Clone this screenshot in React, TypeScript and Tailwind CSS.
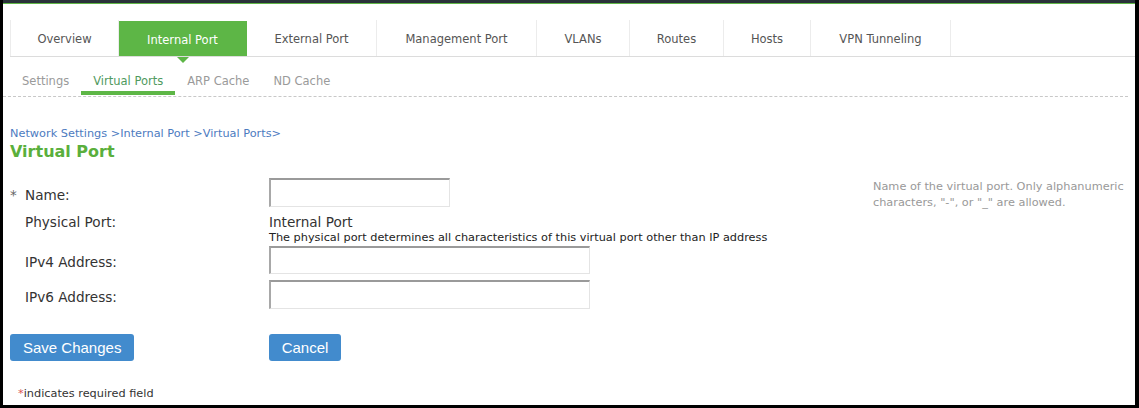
import React from 'react';
import { clsx } from 'clsx';

const tabs = [
  { label: 'Overview', w: 'w-[109px]' },
  { label: 'Internal Port', w: 'w-[128px]', active: true },
  { label: 'External Port', w: 'w-[130px]' },
  { label: 'Management Port', w: 'w-[160px]' },
  { label: 'VLANs', w: 'w-[93px]' },
  { label: 'Routes', w: 'w-[94px]' },
  { label: 'Hosts', w: 'w-[87px]' },
  { label: 'VPN Tunneling', w: 'w-[140px]' },
];

const subTabs = [
  { label: 'Settings' },
  { label: 'Virtual Ports', active: true },
  { label: 'ARP Cache' },
  { label: 'ND Cache' },
];

function TextInput({ width }: { width: string }) {
  return (
    <input
      type="text"
      className={clsx(
        'h-full bg-white outline-none border-t-2 border-l-2 border-r border-b border-t-[#9a9a9a] border-l-[#a8a8a8] border-r-[#e4e4e4] border-b-[#e4e4e4]',
        width
      )}
    />
  );
}

export default function App() {
  return (
    <div className="h-[408px] w-full flex flex-col bg-white border-l-[3px] border-r-[4px] border-b-[3px] border-black font-['DejaVu_Sans',sans-serif] text-[#333] overflow-hidden">
      {/* top bar */}
      <div className="h-[3px] bg-[#2a323a] shrink-0" />
      <div className="h-px bg-[#5fb547] shrink-0" />

      {/* main tabs */}
      <div className="mt-[16px] ml-[7px] flex border-b border-[#dcdcdc] h-[37px] shrink-0">
        {tabs.map((t, i) => (
          <div
            key={t.label}
            className={clsx(
              'relative flex items-center justify-center pt-[4px] text-[11.5px] border-r border-[#ececec]',
              t.w,
              i === 0 && 'border-l',
              t.active ? 'bg-[#5db646] text-white mt-px border-r-[#5db646]' : 'text-[#555]'
            )}
          >
            {t.label}
            {t.active && (
              <span className="absolute left-1/2 -translate-x-1/2 top-full mt-px w-0 h-0 border-x-[6px] border-x-transparent border-t-[6px] border-t-[#5db646]" />
            )}
          </div>
        ))}
      </div>

      {/* sub tabs */}
      <div className="mr-[7px] border-b border-dashed border-[#c8c8c8] pb-px shrink-0">
        <div className="flex mt-[13px] ml-[7px]">
          {subTabs.map((s) => (
            <div
              key={s.label}
              className={clsx(
                'px-[12px] h-[25px] pt-px leading-[20px] text-[11.5px] border-b-4',
                s.active ? 'border-[#5db646] text-[#4f9a5e]' : 'border-transparent text-[#9a9a9a]'
              )}
            >
              {s.label}
            </div>
          ))}
        </div>
      </div>

      <div className="pl-[7px]">
        {/* breadcrumb */}
        <div className="mt-[30px] text-[11.3px] leading-[14px] text-[#4d7bbf]">
          Network Settings &gt;Internal Port &gt;Virtual Ports&gt;
        </div>
        <h1 className="mt-[1px] text-[16px] leading-[20px] font-bold text-[#5aaf3c]">Virtual Port</h1>

        {/* Name */}
        <div className="mt-[16px] flex h-[29px]">
          <div className="w-[259px] shrink-0 pt-[8px] leading-[18px] text-[13.6px] flex">
            <span className="w-[15px] text-[#666]">*</span>
            <span>Name:</span>
          </div>
          <TextInput width="w-[181px]" />
          <div className="ml-auto w-[262px] pt-px text-[11.3px] leading-[16px] text-[#999] whitespace-nowrap">
            Name of the virtual port. Only alphanumeric
            <br />
            characters, "-", or "_" are allowed.
          </div>
        </div>

        {/* Physical port */}
        <div className="mt-[6px] flex">
          <div className="w-[259px] shrink-0 pl-[15px] leading-[18px] text-[13.6px]">Physical Port:</div>
          <div>
            <div className="text-[13.6px] leading-[18px]">Internal Port</div>
            <div className="text-[11.3px] leading-[14px] text-[#222] whitespace-nowrap">
              The physical port determines all characteristics of this virtual port other than IP address
            </div>
          </div>
        </div>

        {/* IPv4 */}
        <div className="mt-px flex h-[28px]">
          <div className="w-[259px] shrink-0 pl-[15px] pt-[7px] leading-[18px] text-[13.6px]">IPv4 Address:</div>
          <TextInput width="w-[321px]" />
        </div>

        {/* IPv6 */}
        <div className="mt-[6px] flex h-[29px]">
          <div className="w-[259px] shrink-0 pl-[15px] pt-[8px] leading-[18px] text-[13.6px]">IPv6 Address:</div>
          <TextInput width="w-[321px]" />
        </div>

        {/* buttons */}
        <div className="mt-[25px] flex h-[27px] font-['Liberation_Sans',Arial,sans-serif]">
          <div className="w-[259px] shrink-0">
            <button className="h-[27px] px-[13px] rounded-[3px] bg-[#428bcd] text-white text-[15px] leading-[27px]">
              Save Changes
            </button>
          </div>
          <button className="h-[27px] w-[72px] rounded-[3px] bg-[#428bcd] text-white text-[15px] leading-[27px]">
            Cancel
          </button>
        </div>

        {/* footnote */}
        <div className="mt-[26px] pl-[8px] text-[11.3px] leading-[14px] text-[#333]">
          <span className="text-[#d9534f]">*</span>indicates required field
        </div>
      </div>
    </div>
  );
}
